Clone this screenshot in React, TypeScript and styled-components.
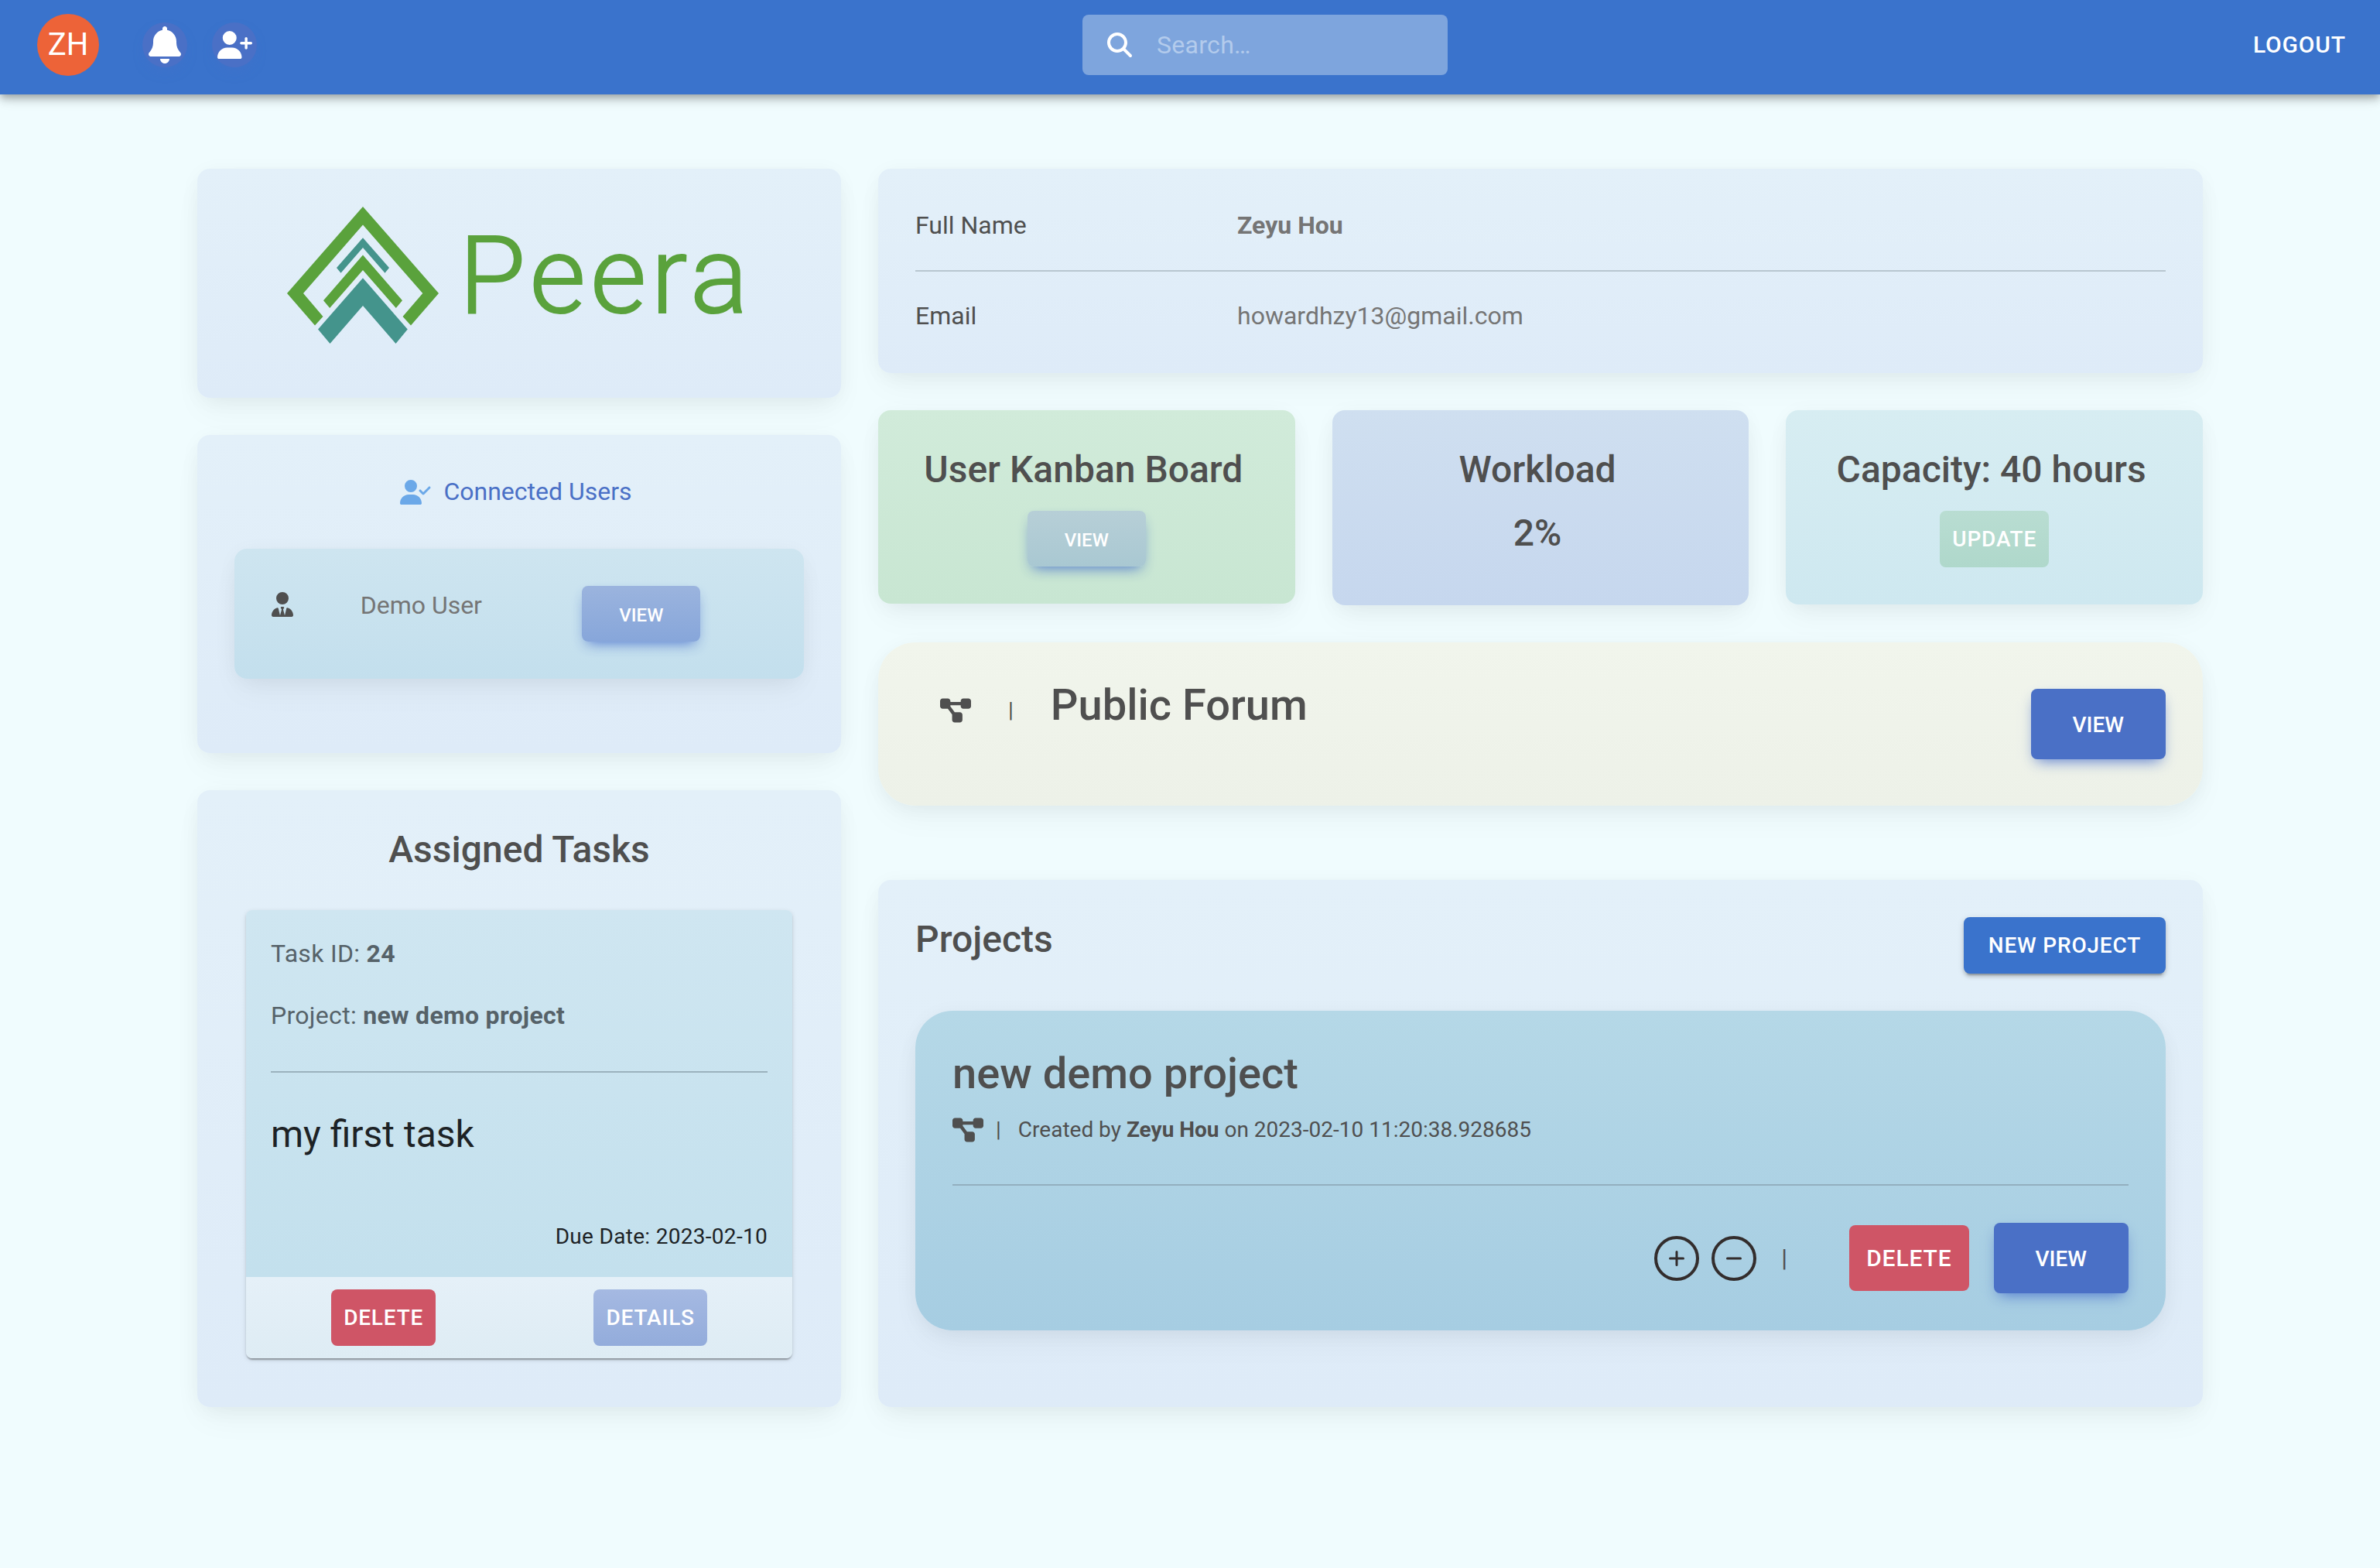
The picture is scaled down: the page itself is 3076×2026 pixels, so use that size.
import React from "react";
import styled, { createGlobalStyle } from "styled-components";
import {
  FaBell,
  FaUserPlus,
  FaUserCheck,
  FaUserTie,
  FaDiagramProject,
  FaMagnifyingGlass,
} from "react-icons/fa6";

const Global = createGlobalStyle`
  *, *::before, *::after { box-sizing: border-box; }
  body {
    margin: 0;
    min-height: 100vh;
    background: #f0fcfe;
    color: #4f4f4f;
    font-family: Roboto, "Liberation Sans", sans-serif;
    font-size: 32px;
    line-height: 51px;
  }
  h1, h2, h3, p, dl, dt, dd, ul { margin: 0; padding: 0; }
  button, input { font-family: inherit; }
  svg { display: block; flex: none; }
`;

const softShadow = "0 4px 30px -6px rgba(0, 0, 0, 0.07), 0 20px 40px -4px rgba(0, 0, 0, 0.04)";

/* Top bar */
const TopBar = styled.header`
  display: flex;
  justify-content: space-between;
  align-items: center;
  padding: 18px 44px 24px 48px;
  background: #3a73cc;
  box-shadow: 0 4px 8px -2px rgba(0, 0, 0, 0.2), 0 8px 10px rgba(0, 0, 0, 0.14),
    0 2px 20px rgba(0, 0, 0, 0.12);
`;

const BarGroup = styled.div`
  display: flex;
  align-items: center;
  gap: 32px;
  padding-right: 26px;
`;

const Avatar = styled.div`
  display: grid;
  place-items: center;
  width: 80px;
  height: 80px;
  margin-right: 24px;
  border-radius: 50%;
  background: #ed6338;
  color: #fff;
  font-size: 40px;
  line-height: 40px;
`;

const RoundButton = styled.button`
  display: grid;
  place-items: center;
  width: 58px;
  height: 58px;
  padding: 0;
  border: 0;
  border-radius: 50%;
  background: #4a70c6;
  color: #fff;
  box-shadow: 0 8px 18px -8px rgba(74, 112, 198, 0.6);
`;

const BellIcon = styled(FaBell)`
  width: 42px;
  height: 48px;
`;

const AddUserIcon = styled(FaUserPlus)`
  width: 45px;
  height: 36px;
`;

const SearchBox = styled.label`
  display: flex;
  align-items: center;
  gap: 32px;
  width: 472px;
  height: 78px;
  padding: 0 32px;
  border-radius: 8px;
  background: #7ea5dd;
  color: #fff;
`;

const SearchInput = styled.input`
  flex: 1;
  min-width: 0;
  padding: 0;
  border: 0;
  outline: 0;
  background: transparent;
  color: #fff;
  font-size: 32px;
  letter-spacing: 0.00938em;
  &::placeholder { color: #b3cbec; opacity: 1; }
`;

const LogoutButton = styled.button`
  padding: 0;
  border: 0;
  background: none;
  color: #fff;
  font-size: 30px;
  line-height: 52px;
  font-weight: 500;
  letter-spacing: 0.02857em;
`;

/* Page frame */
const Page = styled.main`
  padding: 96px 0 96px 26px;
`;

const Row = styled.div`
  display: flex;
  align-items: stretch;
  max-width: 2640px;
  margin: 0 auto;
`;

const Column = styled.div<{ $span: number }>`
  display: flex;
  flex-direction: column;
  flex: 0 0 calc(100% * ${(p) => p.$span} / 12);
  min-width: 0;
  padding: 0 24px;
  gap: 48px;
`;

const Card = styled.section<{ $from?: string; $to?: string; $grow?: boolean }>`
  padding: 48px;
  border-radius: 16px;
  background: linear-gradient(
    to bottom,
    ${(p) => p.$from ?? "#e3f0f9"},
    ${(p) => p.$to ?? "#deebf8"}
  );
  box-shadow: ${softShadow};
  flex: ${(p) => (p.$grow ? "1 0 auto" : "none")};
`;

const Title = styled.h2<{ $large?: boolean }>`
  font-size: ${(p) => (p.$large ? 56 : 48)}px;
  line-height: ${(p) => (p.$large ? 67 : 58)}px;
  font-weight: 500;
`;

const Rule = styled.hr<{ $gap: number; $color?: string }>`
  height: 2px;
  margin: ${(p) => p.$gap}px 0;
  border: 0;
  background: ${(p) => p.$color ?? "#b8c6d0"};
`;

/* Buttons */
type ViewLook = "solid" | "soft" | "pale";
const viewFill: Record<ViewLook, string> = {
  solid: "#4a70c6",
  soft: "linear-gradient(to bottom, #9bb4de, #87a6da)",
  pale: "linear-gradient(to bottom, #b7cfd7, #a9c8d2)",
};

const ViewButton = styled.button<{ $look: ViewLook; $large?: boolean }>`
  padding: ${(p) => (p.$large ? "24px 54px 22px" : "20px 48px 16px")};
  border: 0;
  border-radius: 8px;
  background: ${(p) => viewFill[p.$look]};
  color: #fff;
  font-size: ${(p) => (p.$large ? 28 : 24)}px;
  line-height: ${(p) => (p.$large ? 45 : 36)}px;
  font-weight: 500;
  box-shadow: 0 8px 18px -8px rgba(59, 100, 202, 0.85), 0 8px 16px -4px rgba(59, 100, 202, 0.15);
`;

type ActionTone = "primary" | "danger" | "soft" | "mint";
const actionFill: Record<ActionTone, string> = {
  primary: "#3a73cc",
  danger: "#cf5566",
  soft: "linear-gradient(to bottom, #a5b9e2, #93acdb)",
  mint: "linear-gradient(to bottom, #b9ddd2, #afd8cb)",
};

const ActionButton = styled.button<{ $tone: ActionTone; $large?: boolean; $wide?: boolean }>`
  padding: ${(p) => (p.$large ? "16px 22px" : p.$wide ? "12px 32px" : "12px 16px")};
  border: 0;
  border-radius: 8px;
  background: ${(p) => actionFill[p.$tone]};
  color: #fff;
  font-size: ${(p) => (p.$large ? 30 : 28)}px;
  line-height: ${(p) => (p.$large ? 53 : 49)}px;
  font-weight: 500;
  letter-spacing: 0.02857em;
  box-shadow: ${(p) =>
    p.$tone === "primary"
      ? "0 6px 2px -4px rgba(0,0,0,.2), 0 4px 4px rgba(0,0,0,.14), 0 2px 10px rgba(0,0,0,.12)"
      : "none"};
`;

/* Logo */
const Logo = styled.div`
  display: flex;
  justify-content: center;
  gap: 24px;
  height: 200px;
`;

const Wordmark = styled.span`
  color: #5aa23c;
  font-size: 140px;
  line-height: 180px;
  font-weight: 300;
  letter-spacing: 6px;
  -webkit-text-stroke: 2px #5aa23c;
`;

/* Connected users */
const ConnectedHeading = styled.h2`
  display: flex;
  align-items: center;
  justify-content: center;
  gap: 16px;
  padding-right: 8px;
  margin-bottom: 48px;
  color: #4a70c6;
  font-size: 32px;
  line-height: 51px;
  font-weight: 400;
`;

const CheckedUserIcon = styled(FaUserCheck)`
  width: 40px;
  height: 32px;
  color: #6ba8e8;
`;

const UserCard = styled.article`
  padding: 48px 24px;
  margin-bottom: 48px;
  border-radius: 16px;
  background: linear-gradient(to bottom, #cee5f0, #c3dfed);
  box-shadow: ${softShadow};
`;

const UserGrid = styled.div`
  display: grid;
  grid-template-columns: 2fr 5fr 5fr;
  align-items: start;
`;

const UserCell = styled.div<{ $icon?: boolean }>`
  padding: ${(p) => (p.$icon ? "8px 24px" : "0 24px")};
  display: flex;
  color: ${(p) => (p.$icon ? "#4f4f4f" : "#757575")};
`;

const PersonIcon = styled(FaUserTie)`
  width: 28px;
  height: 32px;
`;

/* Assigned tasks */
const TaskTitle = styled(Title)`
  text-align: center;
  margin-bottom: 49px;
`;

const TaskCard = styled.article`
  margin: 0 15px 15px;
  border-radius: 8px;
  overflow: hidden;
  box-shadow: 0 4px 2px -2px rgba(0, 0, 0, 0.2), 0 2px 2px rgba(0, 0, 0, 0.14),
    0 2px 6px rgba(0, 0, 0, 0.12);
`;

const TaskBody = styled.div`
  padding: 32px;
  background: linear-gradient(to bottom, #cfe6f1, #c3e0ed);
`;

const TaskMeta = styled.p`
  color: #566269;
  line-height: 48px;
  letter-spacing: 0.00938em;
  & + & { margin-top: 32px; }
`;

const TaskName = styled.h3`
  color: #1d2225;
  font-size: 48px;
  line-height: 64px;
  font-weight: 400;
`;

const DueDate = styled.p`
  margin-top: 80px;
  color: #1d2225;
  font-size: 28px;
  line-height: 40px;
  letter-spacing: 0.01071em;
  text-align: right;
`;

const TaskActions = styled.div`
  display: flex;
  justify-content: space-around;
  gap: 16px;
  padding: 16px;
  background: linear-gradient(to bottom, #e5f0f8, #deecf4);
`;

/* Profile */
const Profile = styled.dl`
  display: block;
`;

const ProfileRow = styled.div`
  display: grid;
  grid-template-columns: repeat(4, minmax(0, 1fr));
  column-gap: 48px;
`;

const ProfileValue = styled.dd<{ $bold?: boolean }>`
  grid-column: span 3;
  color: #757575;
  font-weight: ${(p) => (p.$bold ? 700 : 400)};
`;

/* Stats */
const Stats = styled.div`
  display: grid;
  grid-template-columns: repeat(3, minmax(0, 1fr));
  align-items: start;
  gap: 48px;
`;

const StatCard = styled(Card)`
  display: flex;
  flex-direction: column;
  align-items: center;
  gap: 24px;
`;

const StatTitle = styled(Title)`
  padding-right: 8px;
`;

const StatValue = styled(StatTitle)`
  margin-bottom: 16px;
`;

/* Forum */
const ForumCard = styled(Card)`
  display: flex;
  align-items: flex-start;
  padding-left: 80px;
  margin-bottom: 48px;
  border-radius: 48px;
`;

const ForumLead = styled.div`
  display: flex;
  align-items: center;
  gap: 48px;
  padding-top: 14px;
`;

const ForumTitle = styled(Title)`
  flex: 1;
  margin-left: 48px;
`;

const ForumAction = styled.div`
  display: flex;
  padding: 12px 0;
`;

const DiagramIcon = styled(FaDiagramProject)`
  width: 40px;
  height: 36px;
`;

const Bar = styled.span<{ $large?: boolean }>`
  font-size: ${(p) => (p.$large ? 32 : 28)}px;
  line-height: 51px;
`;

/* Projects */
const ProjectsHead = styled.div`
  display: flex;
  align-items: flex-start;
  justify-content: space-between;
  margin-bottom: 48px;
`;

const ProjectCard = styled.article`
  padding: 48px;
  border-radius: 48px;
  background: linear-gradient(to bottom, #b5d8e7, #a6cde2);
  box-shadow: ${softShadow};
`;

const Created = styled.div`
  display: flex;
  align-items: center;
  gap: 16px;
  height: 45px;
  margin-top: 16px;
  font-size: 28px;
  line-height: 45px;
`;

const CreatedText = styled.p`
  margin-left: 6px;
`;

const ProjectActions = styled.div`
  display: flex;
  align-items: center;
  justify-content: flex-end;
  gap: 32px;
`;

const CircleGroup = styled.div`
  display: flex;
  gap: 16px;
`;

const CircleButton = styled.button`
  display: grid;
  place-items: center;
  width: 58px;
  height: 58px;
  padding: 0;
  border: 4px solid #332d2d;
  border-radius: 50%;
  background: transparent;
  color: #332d2d;
`;

const BarSlot = styled.div`
  width: 56px;
`;

const LogoMark = () => (
  <svg width="200" height="180" viewBox="0 0 200 180" aria-hidden="true">
    <g fill="#5aa23c">
      <path d="M100 1 198 113 162 154.500 151.500 143 177.300 113 100 24.500 23 113 48.500 143 38 154.500 2 113Z" />
      <path d="M100 63.500 151 122.300 142.800 132 100 83 57.200 132 49 122.300Z" />
    </g>
    <g fill="#44948c">
      <path d="M100 41.300 134 80 128.500 86.700 100 54 71.500 86.700 66 80Z" />
      <path d="M100 93.300 157.800 159.500 142.500 178 100 129 57.500 178 42 159.500Z" />
    </g>
  </svg>
);

const Sign = ({ plus }: { plus?: boolean }) => (
  <svg width="20" height="20" viewBox="0 0 20 20" stroke="currentColor" strokeWidth="3" strokeLinecap="round">
    <path d={plus ? "M1.500 10h17M10 1.500v17" : "M1.500 10h17"} />
  </svg>
);

export default function App() {
  return (
    <>
      <Global />
      <TopBar>
        <BarGroup>
          <Avatar>ZH</Avatar>
          <RoundButton aria-label="Notifications">
            <BellIcon />
          </RoundButton>
          <RoundButton aria-label="Add user">
            <AddUserIcon />
          </RoundButton>
        </BarGroup>
        <SearchBox>
          <FaMagnifyingGlass size={32} />
          <SearchInput type="text" placeholder="Search…" aria-label="Search" />
        </SearchBox>
        <LogoutButton>LOGOUT</LogoutButton>
      </TopBar>

      <Page>
        <Row>
          <Column $span={4}>
            <Card>
              <Logo>
                <LogoMark />
                <Wordmark>Peera</Wordmark>
              </Logo>
            </Card>

            <Card>
              <ConnectedHeading>
                <CheckedUserIcon />
                Connected Users
              </ConnectedHeading>
              <UserCard>
                <UserGrid>
                  <UserCell $icon>
                    <PersonIcon />
                  </UserCell>
                  <UserCell>Demo User</UserCell>
                  <UserCell>
                    <ViewButton $look="soft">VIEW</ViewButton>
                  </UserCell>
                </UserGrid>
              </UserCard>
            </Card>

            <Card $grow>
              <TaskTitle>Assigned Tasks</TaskTitle>
              <TaskCard>
                <TaskBody>
                  <TaskMeta>
                    Task ID: <b>24</b>
                  </TaskMeta>
                  <TaskMeta>
                    Project: <b>new demo project</b>
                  </TaskMeta>
                  <Rule $gap={48} $color="#9bb2bd" />
                  <TaskName>my first task</TaskName>
                  <DueDate>Due Date: 2023-02-10</DueDate>
                </TaskBody>
                <TaskActions>
                  <ActionButton $tone="danger">DELETE</ActionButton>
                  <ActionButton $tone="soft">DETAILS</ActionButton>
                </TaskActions>
              </TaskCard>
            </Card>
          </Column>

          <Column $span={8}>
            <Card>
              <Profile>
                <ProfileRow>
                  <dt>Full Name</dt>
                  <ProfileValue $bold>Zeyu Hou</ProfileValue>
                </ProfileRow>
                <Rule $gap={32} />
                <ProfileRow>
                  <dt>Email</dt>
                  <ProfileValue>howardhzy13@gmail.com</ProfileValue>
                </ProfileRow>
              </Profile>
            </Card>

            <Stats>
              <StatCard $from="#d1ebda" $to="#c8e6d2">
                <StatTitle>User Kanban Board</StatTitle>
                <ViewButton $look="pale">VIEW</ViewButton>
              </StatCard>
              <StatCard $from="#cfdff0" $to="#c6d7ee">
                <StatTitle>Workload</StatTitle>
                <StatValue as="p">2%</StatValue>
              </StatCard>
              <StatCard $from="#d7edf2" $to="#cee8f0">
                <StatTitle>Capacity: 40 hours</StatTitle>
                <ActionButton $tone="mint">UPDATE</ActionButton>
              </StatCard>
            </Stats>

            <ForumCard $from="#f1f5ec" $to="#edf1e8">
              <ForumLead>
                <DiagramIcon />
                <Bar>|</Bar>
              </ForumLead>
              <ForumTitle $large>Public Forum</ForumTitle>
              <ForumAction>
                <ViewButton $look="solid" $large>VIEW</ViewButton>
              </ForumAction>
            </ForumCard>

            <Card $grow>
              <ProjectsHead>
                <Title>Projects</Title>
                <ActionButton $tone="primary" $wide>NEW PROJECT</ActionButton>
              </ProjectsHead>
              <ProjectCard>
                <Title as="h3" $large>new demo project</Title>
                <Created>
                  <DiagramIcon />
                  <Bar>|</Bar>
                  <CreatedText>
                    Created by <b>Zeyu Hou</b> on 2023-02-10 11:20:38.928685
                  </CreatedText>
                </Created>
                <Rule $gap={48} $color="#93afbf" />
                <ProjectActions>
                  <CircleGroup>
                    <CircleButton aria-label="Add">
                      <Sign plus />
                    </CircleButton>
                    <CircleButton aria-label="Remove">
                      <Sign />
                    </CircleButton>
                  </CircleGroup>
                  <BarSlot>
                    <Bar $large>|</Bar>
                  </BarSlot>
                  <ActionButton $tone="danger" $large>DELETE</ActionButton>
                  <ViewButton $look="solid" $large>VIEW</ViewButton>
                </ProjectActions>
              </ProjectCard>
            </Card>
          </Column>
        </Row>
      </Page>
    </>
  );
}
